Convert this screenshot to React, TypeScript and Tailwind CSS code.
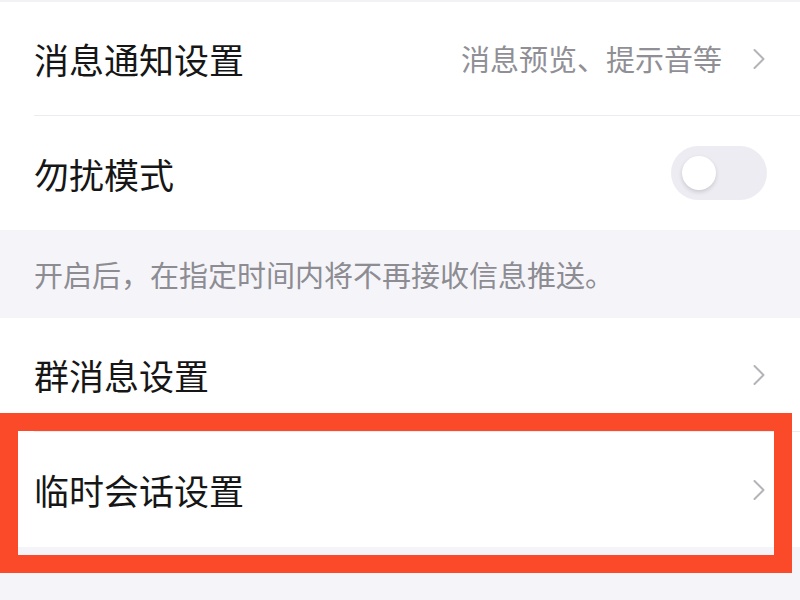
import React from "react";

const font = {
  fontFamily: '"Noto Sans CJK SC", "Noto Sans", sans-serif',
};

const Chevron = () => (
  <svg width="14" height="22" viewBox="0 0 14 22" fill="none" className="shrink-0">
    <path d="M2.5 2 L11.5 11 L2.5 20" stroke="#b3b3b8" strokeWidth="2" strokeLinecap="round" strokeLinejoin="round" />
  </svg>
);

const Row = ({
  title,
  hint,
  right,
  divider,
  height,
}: {
  title: string;
  hint?: string;
  right?: React.ReactNode;
  divider?: boolean;
  height: string;
}) => (
  <div className="bg-white pl-[34px]">
    <div className={`flex items-center pr-[34px] ${height} ${divider ? "border-b border-[#ececf0]" : ""}`}>
      <span className="flex-1 text-[35px] leading-none text-[#161616]">{title}</span>
      {hint && <span className="mr-[30px] text-[29px] leading-none text-[#8f8f95]">{hint}</span>}
      {right ?? <Chevron />}
    </div>
  </div>
);

const Toggle = () => (
  <div className="-mr-[1px] flex h-[54px] w-[96px] items-center rounded-full bg-[#ececf2] pl-[11px]">
    <div className="h-[34px] w-[34px] rounded-full bg-white shadow-[0_2px_4px_rgba(0,0,0,0.15)]" />
  </div>
);

export default function App() {
  return (
    <div className="relative h-[600px] w-[800px] overflow-hidden bg-[#f5f5f9]" style={font}>
      <div className="h-[2px] bg-[#f2f2f6]" />
      <Row title="消息通知设置" hint="消息预览、提示音等" divider height="h-[114px]" />
      <Row title="勿扰模式" right={<Toggle />} height="h-[114px]" />
      <div className="flex h-[88px] items-center pl-[34px] text-[29px] leading-none text-[#8c8c92]">
        开启后，在指定时间内将不再接收信息推送。
      </div>
      <Row title="群消息设置" divider height="h-[114px]" />
      <Row title="临时会话设置" height="h-[115px]" />

      <div className="pointer-events-none absolute left-0 top-[413px] h-[160px] w-[792px] border-[18px] border-[#fb4a2a]" />
    </div>
  );
}
